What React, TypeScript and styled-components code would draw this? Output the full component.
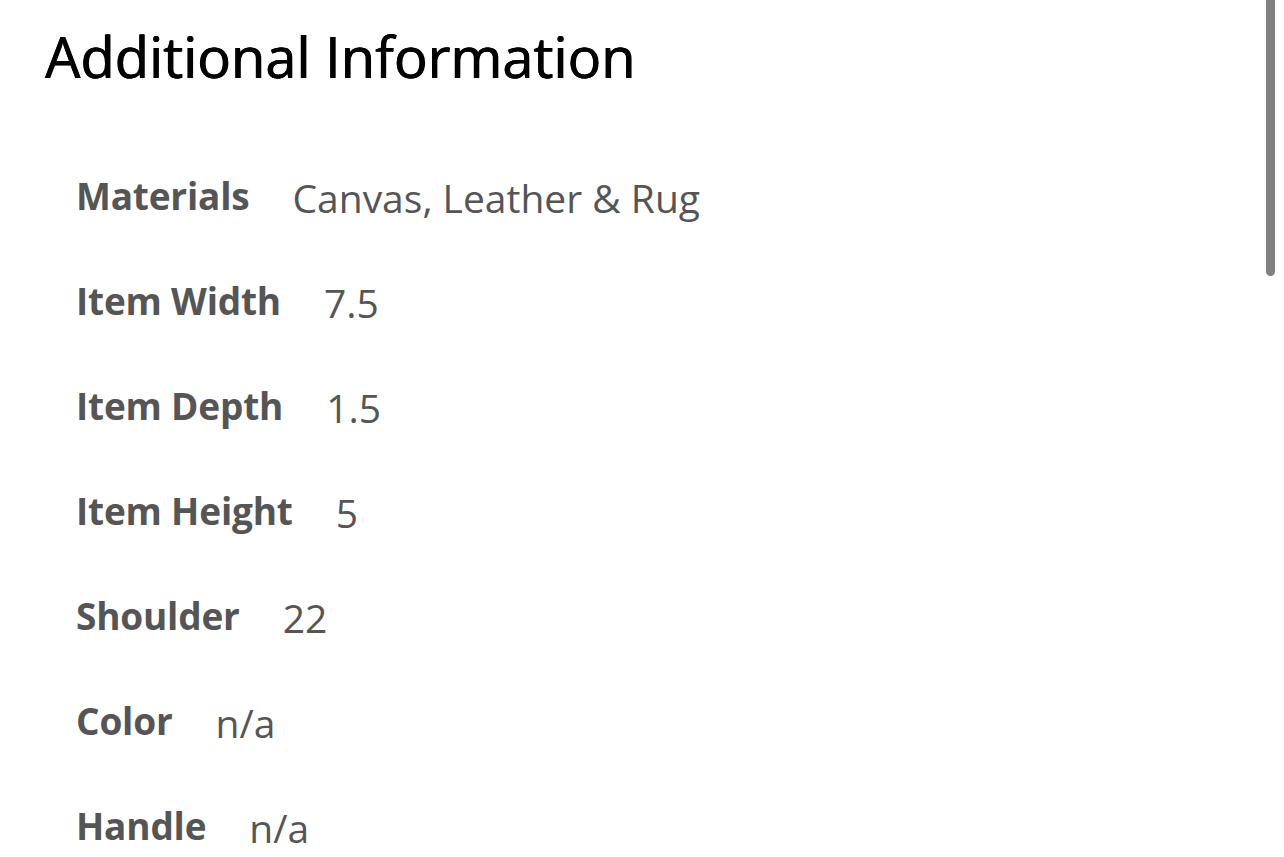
import React from "react";
import styled, { createGlobalStyle } from "styled-components";

const Global = createGlobalStyle`
  html, body { margin: 0; padding: 0; background: #fff; }
  body { font-family: "Open Sans", "Noto Sans", sans-serif; overflow: hidden; }
`;

const Page = styled.div`
  position: relative;
  width: 1284px;
  height: 857px;
  overflow: hidden;
  background: #fff;
`;

const Title = styled.h2`
  margin: 0;
  padding: 23px 0 0 45px;
  font-size: 56px;
  line-height: 67px;
  font-weight: 400;
  color: #000;
  text-shadow: 0.6px 0 0 #000, -0.3px 0 0 #000;
`;

const List = styled.dl`
  margin: 0;
  padding: 53px 0 0 76px;
  display: flex;
  flex-direction: column;
`;

const Row = styled.div`
  display: flex;
  align-items: center;
  height: 105px;
`;

const Label = styled.dt`
  font-size: 37px;
  line-height: 44px;
  font-weight: 700;
  color: #555;
  margin-right: 43px;
  letter-spacing: -0.2px;
`;

const Value = styled.dd`
  margin: 0;
  padding-top: 4px;
  font-size: 39px;
  line-height: 44px;
  font-weight: 400;
  color: #555;
`;

const Scrollbar = styled.div`
  position: absolute;
  top: 0;
  right: 9px;
  width: 9px;
  height: 276px;
  background: #808080;
  border-radius: 0 0 5px 5px;
`;

const rows: [string, string][] = [
  ["Materials", "Canvas, Leather & Rug"],
  ["Item Width", "7.5"],
  ["Item Depth", "1.5"],
  ["Item Height", "5"],
  ["Shoulder", "22"],
  ["Color", "n/a"],
  ["Handle", "n/a"],
];

export default function App() {
  return (
    <Page>
      <Global />
      <Title>Additional Information</Title>
      <List>
        {rows.map(([k, v]) => (
          <Row key={k}>
            <Label>{k}</Label>
            <Value>{v}</Value>
          </Row>
        ))}
      </List>
      <Scrollbar />
    </Page>
  );
}
